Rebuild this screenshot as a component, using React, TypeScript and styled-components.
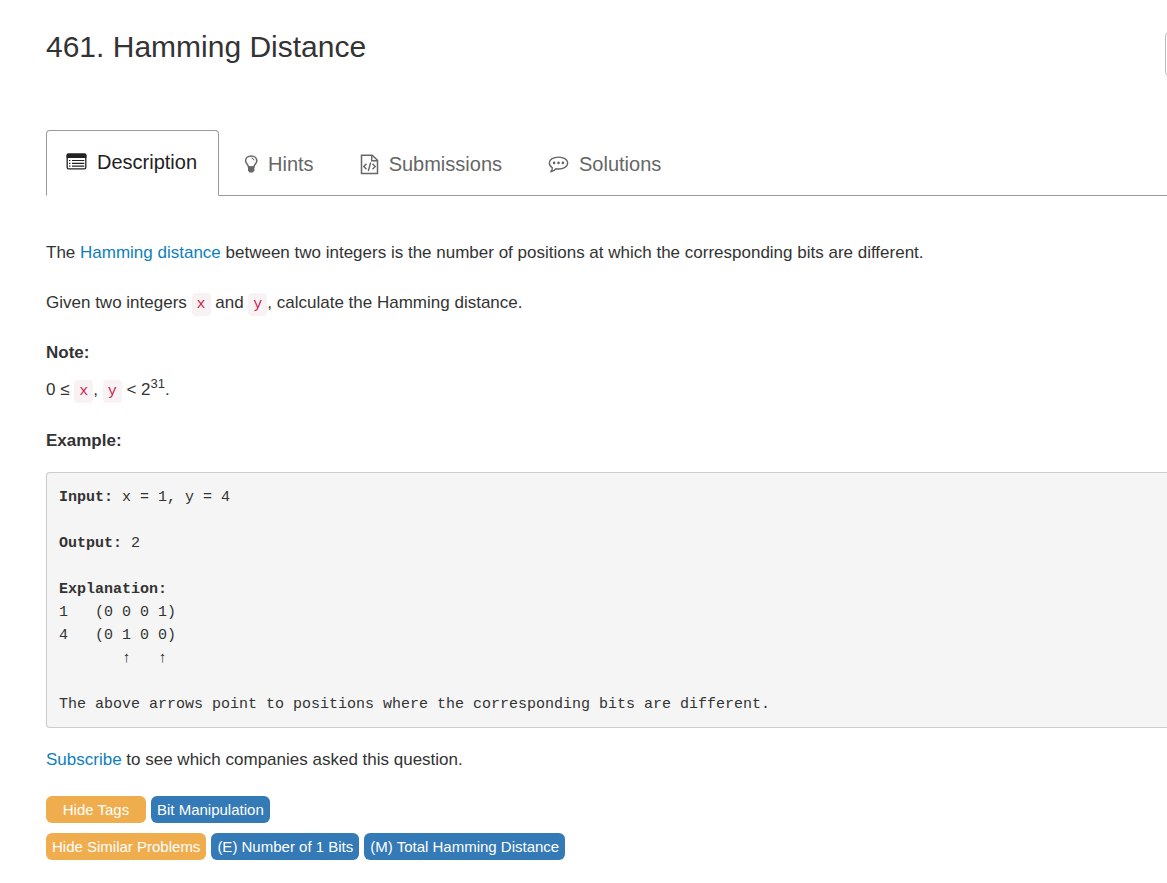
import React from "react";
import styled, { createGlobalStyle } from "styled-components";

const GlobalStyle = createGlobalStyle`
  *, *::before, *::after { box-sizing: border-box; }
  body {
    margin: 0;
    background: #fff;
    color: #333;
    font: 17px/27px "Liberation Sans", Arial, sans-serif;
    overflow-x: hidden;
  }
`;

const Page = styled.main`
  padding: 27px 0 23px 46px;
  overflow: hidden;
`;

const Header = styled.header`
  display: flex;
  align-items: flex-start;
  justify-content: space-between;
  height: 103px;
`;

const Title = styled.h1`
  margin: 0;
  font-size: 30px;
  line-height: 40px;
  font-weight: 400;
`;

const HeaderButton = styled.button`
  flex: none;
  width: 44px;
  height: 44px;
  margin: 5px -42px 0 0;
  border: 1px solid #bbb;
  border-radius: 4px;
  background: #fff;
`;

const Tabs = styled.nav`
  display: flex;
  align-items: flex-end;
  height: 66px;
  border-bottom: 1px solid #999;
`;

const Tab = styled.a<{ $active?: boolean }>`
  display: flex;
  align-items: center;
  gap: 10px;
  height: ${(p) => (p.$active ? "66px" : "64px")};
  padding: ${(p) => (p.$active ? "0 21px 2px 19px" : "0 20px 0 24px")};
  margin-bottom: -1px;
  border: 1px solid ${(p) => (p.$active ? "#999" : "transparent")};
  border-bottom-color: ${(p) => (p.$active ? "#fff" : "transparent")};
  border-radius: 4px 4px 0 0;
  background: ${(p) => (p.$active ? "#fff" : "none")};
  color: ${(p) => (p.$active ? "#222" : "#666")};
  font-size: 20px;
  line-height: 28px;
  text-decoration: none;

  svg { flex: none; }
`;

const Statement = styled.section`
  padding-top: 43px;
`;

const Paragraph = styled.p<{ $tight?: boolean }>`
  margin: 0 0 ${(p) => (p.$tight ? "10px" : "23px")};
`;

const Constraint = styled.p`
  margin: 0 0 24px;
`;

const LastLabel = styled.p`
  margin: 0 0 18px;
`;

const Link = styled.a`
  color: #0d7fbd;
  text-decoration: none;
`;

const Code = styled.code`
  padding: 3px 5px;
  border-radius: 4px;
  background: #f9f2f4;
  color: #c7254e;
  font: 15px/17px "Liberation Mono", monospace;
`;

const Power = styled.sup`
  font-size: 13px;
  line-height: 0;
`;

const Sample = styled.pre`
  margin: 0 0 18px;
  padding: 13px 12px 11px;
  border: 1px solid #ccc;
  border-right: 0;
  border-radius: 4px 0 0 4px;
  background: #f5f5f5;
  font: 15px/23px "Liberation Mono", monospace;
`;

const TagRow = styled.div`
  display: flex;
  flex-wrap: wrap;
  gap: 5px;
  margin-bottom: 10px;
`;

const tagShape = `
  height: 27px;
  padding: 0 6px;
  border: 0;
  border-radius: 6px;
  color: #fff;
  font: 15px/27px "Liberation Sans", Arial, sans-serif;
  white-space: nowrap;
  text-align: center;
`;

const ToggleButton = styled.button`
  ${tagShape}
  min-width: 100px;
  background: #f0ad4e;
`;

const TagLink = styled.a`
  ${tagShape}
  background: #337ab7;
  text-decoration: none;
`;

const ListIcon = () => (
  <svg width="21" height="18" viewBox="0 0 21 18" aria-hidden="true">
    <rect x="1.200" y="1.200" width="18.600" height="14.600" rx="1.400" fill="none" stroke="currentColor" strokeWidth="1.300" />
    <path d="M.6 5V2Q.6.600 2 .6h17Q20.400.600 20.400 2v3z" fill="currentColor" />
    <path d="M6 7.500h12.300M6 10.300h12.300M6 13.100h12.300M3 7.500h1.400M3 10.300h1.400M3 13.100h1.400" stroke="currentColor" strokeWidth="1.200" />
  </svg>
);

const BulbIcon = () => (
  <svg width="14" height="18" viewBox="0 0 14 18" aria-hidden="true">
    <path d="M4.500 12C4.500 9.700 1.600 8.700 1.600 5.700 1.600 2.900 4 .9 7.200.9s5.600 2 5.600 4.800c0 3-2.900 4-2.900 6.300z" fill="none" stroke="currentColor" strokeWidth="1.500" />
    <path d="M7.500 3.100q2.200.2 2.600 2.300" fill="none" stroke="currentColor" strokeWidth="1" />
    <path d="M4 11.400h6.400v3.800L9 17.600H5.400L4 15.200z" fill="currentColor" />
  </svg>
);

const CodeFileIcon = () => (
  <svg width="19" height="21" viewBox="0 0 19 21" fill="none" stroke="currentColor" aria-hidden="true">
    <path d="M1.500 1.200h10.700l5.300 5v13.300h-16z" strokeWidth="1.500" />
    <path d="M11.700 1.400v5.400h5.600" strokeWidth="1.400" />
    <path d="M6.500 9.800 3.800 12.500l2.700 2.700M12.500 9.800l2.700 2.700-2.700 2.700M10.700 8.500l-2.400 8.500" strokeWidth="1.400" />
  </svg>
);

const ChatIcon = () => (
  <svg width="21" height="18" viewBox="0 0 21 18" aria-hidden="true">
    <path d="M10.500 2.100c5 0 9.200 2.300 9.200 5.900s-4.200 6-9.200 6c-.9 0-1.700-.1-2.500-.2-1.300 1.600-2.900 2.600-5.200 2.900.9-1 1.500-2.200 1.600-3.900C2.500 11.700 1.300 10.100 1.300 8c0-3.600 4.200-5.900 9.200-5.900z" fill="none" stroke="currentColor" strokeWidth="1.400" strokeLinejoin="round" />
    <g fill="currentColor">
      <circle cx="6.100" cy="7.900" r="1.300" />
      <circle cx="10.500" cy="7.900" r="1.300" />
      <circle cx="14.900" cy="7.900" r="1.300" />
    </g>
  </svg>
);

export default function App() {
  return (
    <>
      <GlobalStyle />
      <Page>
        <Header>
          <Title>461. Hamming Distance</Title>
          <HeaderButton type="button" aria-label="Options" />
        </Header>
        <Tabs>
          <Tab href="#description" $active aria-current="page"><ListIcon />Description</Tab>
          <Tab href="#hints"><BulbIcon />Hints</Tab>
          <Tab href="#submissions"><CodeFileIcon />Submissions</Tab>
          <Tab href="#solutions"><ChatIcon />Solutions</Tab>
        </Tabs>
        <Statement>
          <Paragraph>
            The <Link href="#hamming-distance">Hamming distance</Link> between two integers is the number of positions at which the corresponding bits are different.
          </Paragraph>
          <Paragraph>
            Given two integers <Code>x</Code> and <Code>y</Code>, calculate the Hamming distance.
          </Paragraph>
          <Paragraph $tight><b>Note:</b></Paragraph>
          <Constraint>
            0 ≤ <Code>x</Code>, <Code>y</Code> &lt; 2<Power>31</Power>.
          </Constraint>
          <LastLabel><b>Example:</b></LastLabel>
          <Sample>
            <b>Input:</b>{" x = 1, y = 4\n\n"}
            <b>Output:</b>{" 2\n\n"}
            <b>Explanation:</b>{"\n1   (0 0 0 1)\n4   (0 1 0 0)\n       ↑   ↑\n\n"}
            {"The above arrows point to positions where the corresponding bits are different."}
          </Sample>
          <Paragraph>
            <Link href="#subscribe">Subscribe</Link> to see which companies asked this question.
          </Paragraph>
          <TagRow>
            <ToggleButton type="button">Hide Tags</ToggleButton>
            <TagLink href="#bit-manipulation">Bit Manipulation</TagLink>
          </TagRow>
          <TagRow>
            <ToggleButton type="button">Hide Similar Problems</ToggleButton>
            <TagLink href="#number-of-1-bits">(E) Number of 1 Bits</TagLink>
            <TagLink href="#total-hamming-distance">(M) Total Hamming Distance</TagLink>
          </TagRow>
        </Statement>
      </Page>
    </>
  );
}
